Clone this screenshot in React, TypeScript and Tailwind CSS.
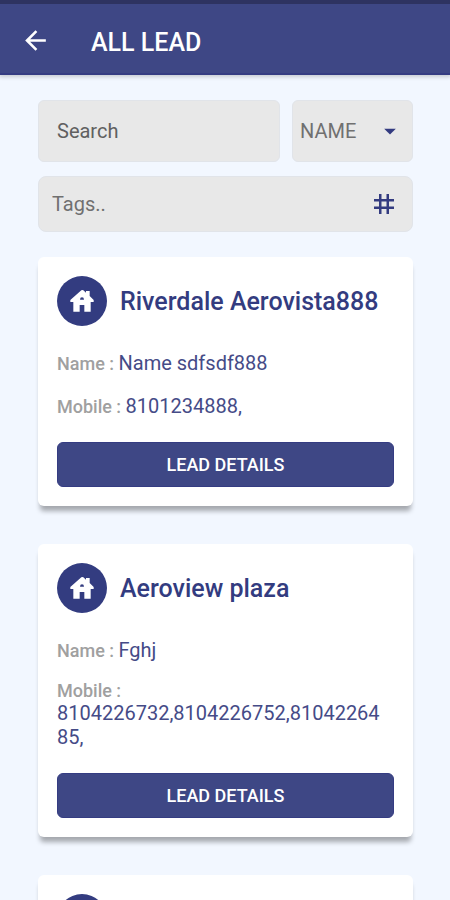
import React, { useState } from 'react';
import { MdArrowBack, MdArrowDropDown, MdTag } from 'react-icons/md';

interface Lead {
  id: number;
  project?: string;
  name?: string;
  mobile?: string;
}

const LEADS: Lead[] = [
  { id: 1, project: 'Riverdale Aerovista888', name: 'Name sdfsdf888', mobile: '8101234888,' },
  { id: 2, project: 'Aeroview plaza', name: 'Fghj', mobile: '8104226732,8104226752,8104226485,' },
  { id: 3 },
];

const HouseIcon: React.FC = () => {
  return (
    <svg viewBox="0 0 70 66" className="h-[22px] w-6" fill="currentColor" fillRule="evenodd" aria-hidden="true">
      <path d="M33 1Q36 -1 39 1L47 8V3H58V18L70 30V36H61V65H42V45H28V65H9V36H0V30ZM29 29H41Q41 22 35 22Q29 22 29 29Z" />
    </svg>
  );
};

const Header: React.FC = () => {
  return (
    <header className="relative flex-shrink-0 border-t-4 border-t-[#2e3361] border-b-2 border-b-[#353c82] bg-[#3e4785] shadow-[0_1px_4px_1px_rgba(0,0,0,0.18)]">
      <div className="flex h-[69px] items-center gap-[40px] px-[20px] pt-1 text-white">
        <button type="button" aria-label="Back" className="cursor-pointer">
          <MdArrowBack size={31} />
        </button>
        <h1 className="pt-1 text-[25px] leading-8 font-medium">ALL LEAD</h1>
      </div>
    </header>
  );
};

const Filters: React.FC = () => {
  const [search, setSearch] = useState('');
  const [tags, setTags] = useState('');

  return (
    <div className="flex flex-col gap-[14px]">
      <div className="grid grid-cols-[2fr_1fr] gap-3">
        <input
          type="text"
          aria-label="Search"
          placeholder="Search"
          value={search}
          onChange={(e) => setSearch(e.target.value)}
          className="h-[62px] w-full min-w-0 rounded-md border border-[#e1e4e9] bg-[#e8e8e8] px-[18px] text-[20px] text-[#606060] outline-none placeholder:text-[#606060]"
        />
        <div className="relative min-w-0">
          <select
            aria-label="Search by"
            className="h-[62px] w-full appearance-none rounded-md border border-[#e1e4e9] bg-[#e8e8e8] px-[7px] text-[20px] text-[#707070] outline-none"
          >
            <option>NAME</option>
          </select>
          <MdArrowDropDown size={28} className="pointer-events-none absolute top-[17px] right-[9px] text-[#333b80]" />
        </div>
      </div>
      <div className="flex h-[56px] items-center rounded-lg border border-[#e1e4e9] bg-[#e8e8e8] px-[13px]">
        <input
          type="text"
          aria-label="Tags"
          placeholder="Tags.."
          value={tags}
          onChange={(e) => setTags(e.target.value)}
          className="min-w-0 flex-1 bg-transparent text-[20px] text-[#707070] outline-none placeholder:text-[#707070]"
        />
        <MdTag size={30} className="text-[#333b80]" />
      </div>
    </div>
  );
};

const LeadCard: React.FC<{ lead: Lead }> = ({ lead }) => {
  return (
    <article className="rounded-md bg-white p-[19px] shadow-[0_7px_5px_-2px_rgba(0,0,0,0.32)]">
      <div className="flex items-center gap-[13px]">
        <span className="flex size-[50px] flex-shrink-0 items-center justify-center rounded-full bg-[#333c80] text-white">
          <HouseIcon />
        </span>
        {lead.project && <h2 className="pt-[2px] text-[25px] leading-8 font-medium text-[#333c80]">{lead.project}</h2>}
      </div>
      {lead.name && (
        <p className="mt-[25px] text-[18px] leading-5 font-medium text-[#a0a0a0]">
          Name : <span className="text-[20px] leading-6 font-normal text-[#454b87]">{lead.name}</span>
        </p>
      )}
      {lead.mobile && (
        <p className="mt-[19px] pr-2 text-[18px] leading-5 font-medium break-words text-[#a0a0a0]">
          Mobile : <span className="text-[20px] leading-6 font-normal text-[#454b87]">{lead.mobile}</span>
        </p>
      )}
      {lead.project && (
        <button
          type="button"
          className="mt-6 h-[45px] w-full cursor-pointer rounded-md border border-[#353c82] bg-[#3e4785] text-[18px] font-medium text-white"
        >
          LEAD DETAILS
        </button>
      )}
    </article>
  );
};

export default function App() {
  return (
    <div className="flex h-screen flex-col bg-[#f2f7ff] font-[Roboto,sans-serif]">
      <Header />
      <main className="flex-1 overflow-y-auto pt-[25px] pr-[37px] pl-[38px] [scrollbar-width:none]">
        <Filters />
        <div className="mt-[25px] flex flex-col gap-[38px]">
          {LEADS.map((lead) => (
            <LeadCard key={lead.id} lead={lead} />
          ))}
        </div>
      </main>
    </div>
  );
}
